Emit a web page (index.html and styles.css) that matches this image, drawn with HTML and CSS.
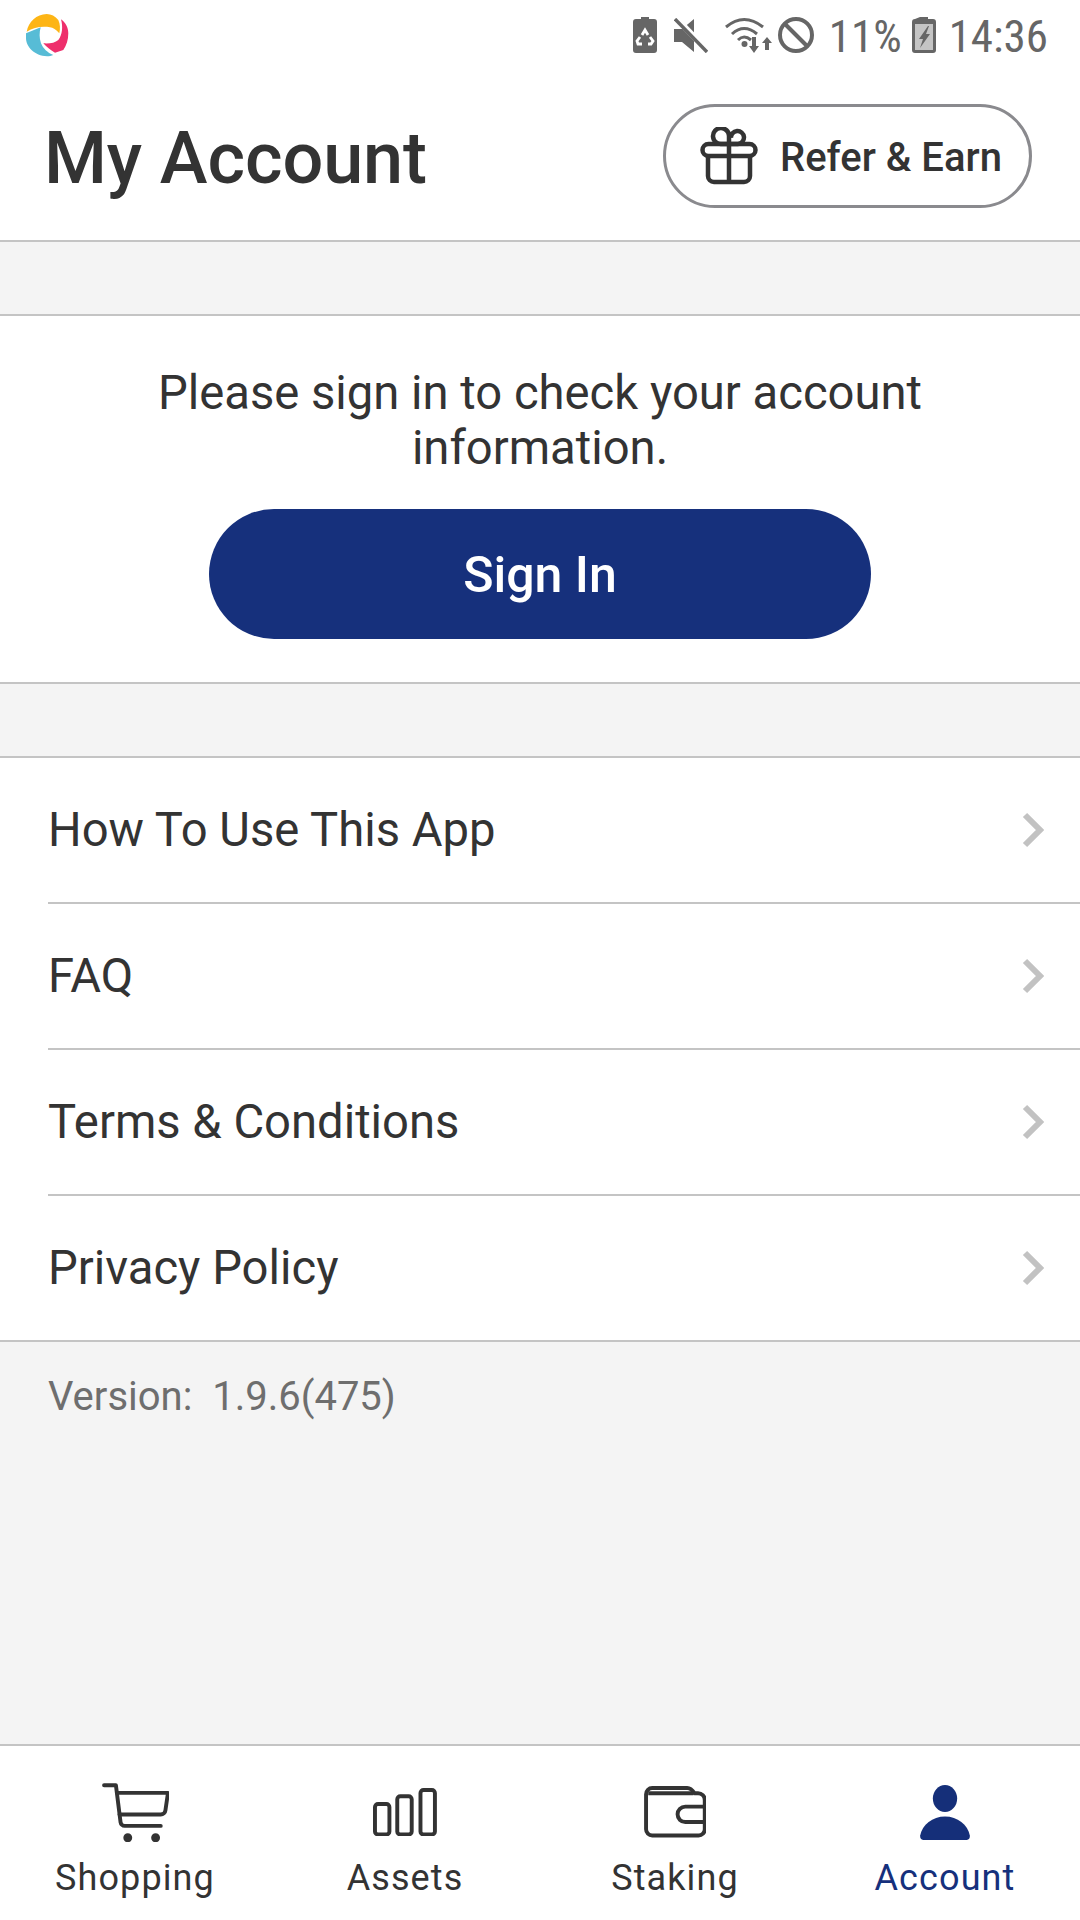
FILE: index.html
```html
<!DOCTYPE html>
<html lang="en">
<head>
<meta charset="utf-8">
<title>My Account</title>
<link rel="stylesheet" href="styles.css">
</head>
<body>
<div class="app">
  <div class="status">
    <svg class="logo" viewBox="0 0 43 43" width="43" height="43">
      <path fill="#fdb515" d="M.7 17.7C2.500 7.500 10.500.3 20.700 0c4.500 0 8.500 2 11.600 6 2 4 2 9 1 13.300C30 15.500 27 13.600 24 13.300 15.500 12 7.500 13.500.7 17.700z"/>
      <path fill="#ee2f6c" d="M35 5.300C39.500 8.500 42.300 13.500 42.300 19.300c0 6.700-1.700 12-5 16.700l-8.300 2.700c-4-2.500-8.300-5.700-11.700-9.400 6 .4 11.700-.3 15-3.300C36.500 21 37 12.500 35 5.300z"/>
      <path fill="#57bcd6" d="M0 19.300 14.700 13.300c-1.500 5-1.500 11 .3 16 2 5 6.500 9.500 12.300 11.700-2 1-4 1.300-6.300 1.300C8.500 42 0 32.500 0 24.300z"/>
    </svg>
    <div class="status-right">
      <svg class="st-icon" viewBox="0 0 24 36" width="24" height="36"><path fill="#666" d="M8 0h8v2h5a3 3 0 0 1 3 3v28a3 3 0 0 1-3 3H3a3 3 0 0 1-3-3V5a3 3 0 0 1 3-3h5z"/><path fill="none" stroke="#fff" stroke-width="2.800" d="M9 18l3-5 3 5M17 20l3 4-2 3h-3M9 27H5l-1-3 3-4"/></svg>
      <svg class="st-icon st-mute" viewBox="0 0 34 35" width="34" height="35"><path fill="#666" d="M0 11h8L20 1v33L8 24H0z"/><path stroke="#fff" stroke-width="6" d="M-1 -3l36 37"/><path stroke="#666" stroke-width="3.400" d="M1 1l32 33"/></svg>
      <svg class="st-icon st-wifi" viewBox="0 0 48 36" width="48" height="36"><g fill="none" stroke="#666" stroke-width="3"><path d="M1 10Q19-5 38 10"/><path d="M7 17Q19 6 32 17"/><path d="M13 23Q19 17 26 23"/></g><circle cx="19.500" cy="27" r="3" fill="#666"/><path fill="#666" d="M27 20h4v9h3l-5 7-5-7h3zM40 33v-7h-3l5-6 5 6h-3v7z"/></svg>
      <svg class="st-icon st-block" viewBox="0 0 36 36" width="36" height="36"><circle cx="18" cy="18" r="16" fill="none" stroke="#666" stroke-width="4"/><path stroke="#666" stroke-width="4" d="M7 7l22 22"/></svg>
      <span class="st-text st-pct">11%</span>
      <svg class="st-icon st-batt" viewBox="0 0 24 36" width="24" height="36"><path fill="#666" d="M8 0h8v2h5a3 3 0 0 1 3 3v28a3 3 0 0 1-3 3H3a3 3 0 0 1-3-3V5a3 3 0 0 1 3-3z"/><rect x="3" y="7" width="18" height="26" fill="#c4c4c4"/><path fill="#666" d="M16 9 7 22h4l-3 9 10-14h-4l3-8z"/></svg>
      <span class="st-text st-time">14:36</span>
    </div>
  </div>

  <header class="header">
    <h1 class="title">My Account</h1>
    <div class="refer">
      <svg class="gift" viewBox="0 0 58 58" width="58" height="58" fill="none" stroke="#333" stroke-width="4.500" stroke-linejoin="round"><rect x="2.500" y="17" width="53" height="12" rx="6"/><path d="M8 29v20a6 6 0 0 0 6 6h30a6 6 0 0 0 6-6V29M29 17v38"/><path d="M29 17h-7a8 8 0 1 1 7-8zM29 17h9a6.500 6.500 0 1 0-7-6"/></svg>
      <span class="refer-label">Refer &amp; Earn</span>
    </div>
  </header>

  <div class="spacer"></div>

  <section class="signin">
    <p class="signin-text">Please sign in to check your account information.</p>
    <button class="signin-btn">Sign In</button>
  </section>

  <div class="spacer"></div>

  <ul class="menu">
    <li class="menu-row"><span>How To Use This App</span><svg class="chev" viewBox="0 0 22 36" width="22" height="36"><path d="M3 3l15 15L3 33" fill="none" stroke="#c2c2c2" stroke-width="6"/></svg></li>
    <li class="menu-row"><span>FAQ</span><svg class="chev" viewBox="0 0 22 36" width="22" height="36"><path d="M3 3l15 15L3 33" fill="none" stroke="#c2c2c2" stroke-width="6"/></svg></li>
    <li class="menu-row"><span>Terms &amp; Conditions</span><svg class="chev" viewBox="0 0 22 36" width="22" height="36"><path d="M3 3l15 15L3 33" fill="none" stroke="#c2c2c2" stroke-width="6"/></svg></li>
    <li class="menu-row"><span>Privacy Policy</span><svg class="chev" viewBox="0 0 22 36" width="22" height="36"><path d="M3 3l15 15L3 33" fill="none" stroke="#c2c2c2" stroke-width="6"/></svg></li>
  </ul>

  <div class="version">Version:&nbsp; 1.9.6(475)</div>

  <nav class="tabs">
    <div class="tab">
      <div class="tab-icon"><svg viewBox="0 0 65 57" width="67" height="59" fill="none" stroke="#333" stroke-width="3.800" stroke-linecap="round" stroke-linejoin="round"><path d="M2 2h11.500l4.500 36a4 4 0 0 0 4 3.500h35"/><path d="M15 9.500h49l-2.500 17a4.500 4.500 0 0 1-4.500 4H17"/><circle cx="25" cy="53" r="2.800" fill="#333" stroke-width="3"/><circle cx="52" cy="53" r="2.800" fill="#333" stroke-width="3"/></svg></div>
      <span>Shopping</span>
    </div>
    <div class="tab">
      <div class="tab-icon"><svg viewBox="0 0 62 47" width="64" height="48.500" fill="none" stroke="#333" stroke-width="3.800"><rect x="1.900" y="15.500" width="14" height="29.600" rx="3"/><rect x="23.500" y="8" width="14" height="37.100" rx="3"/><rect x="46" y="1.900" width="14" height="43.200" rx="3"/></svg></div>
      <span>Assets</span>
    </div>
    <div class="tab">
      <div class="tab-icon"><svg viewBox="0 0 60 50" width="62" height="51.500" fill="none" stroke="#333" stroke-width="3.800" stroke-linejoin="round"><path d="M1.900 8a6 6 0 0 1 6-6h34c3 0 5 2 7 5h3.500a6.500 6.500 0 0 1 6.500 6.500v28.500a6 6 0 0 1-6 6H7.900a6 6 0 0 1-6-6z"/><path d="M4 7h44"/><path d="M58 20H40a7.500 7.500 0 0 0 0 15h18"/></svg></div>
      <span>Staking</span>
    </div>
    <div class="tab active">
      <div class="tab-icon"><svg viewBox="0 0 48 53" width="50" height="55" fill="#152f79"><ellipse cx="24" cy="13" rx="11.700" ry="13"/><path d="M0 49C2 38 12 30.300 24 30.300s22 7.700 24 18.700c0 2.500-1 4-3 4H3c-2 0-3-1.500-3-4z"/></svg></div>
      <span>Account</span>
    </div>
  </nav>
</div>
</body>
</html>
```

FILE: styles.css
```css
* { box-sizing: border-box; }
html, body { margin: 0; padding: 0; }
body { font-family: Roboto, "Liberation Sans", sans-serif; color: #333; background: #fff; }
.app { width: 1080px; height: 1920px; display: flex; flex-direction: column; overflow: hidden; }

.status { height: 72px; display: flex; align-items: center; justify-content: space-between; padding: 0 32px 2px 26px; }
.logo { flex: none; }
.status-right { display: flex; align-items: center; color: #666; }
.st-icon { flex: none; display: block; }
.st-mute { margin-left: 17px; }
.st-wifi { margin-left: 16.500px; }
.st-block { margin-left: 5px; }
.st-text { font-size: 45px; line-height: 1; color: #666; font-stretch: 85%; padding-top: 2px; }
.st-pct { margin-left: 15px; margin-right: 10px; }
.st-batt { margin-right: 13px; }

.header { height: 170px; display: flex; align-items: center; justify-content: space-between; padding: 0 48px 0 44px; border-bottom: 2px solid #c4c4c4; }
.title { margin: 0; padding-top: 5px; font-size: 72px; font-weight: 500; color: #333; letter-spacing: -0.100px; }
.refer { width: 369px; height: 104px; border: 3px solid #8a8a8e; border-radius: 52px; display: flex; align-items: center; padding-left: 34px; gap: 22px; font-size: 40px; font-weight: 500; color: #333; }
.refer-label { padding-top: 3px; }
.gift { flex: none; }

.spacer { height: 74px; background: #f4f4f4; border-bottom: 2px solid #c4c4c4; flex: none; }

.signin { height: 368px; padding-top: 50px; display: flex; flex-direction: column; align-items: center; border-bottom: 2px solid #c4c4c4; flex: none; }
.signin-text { margin: 0; width: 800px; text-align: center; font-size: 47.200px; line-height: 55px; color: #333; }
.signin-btn { margin-top: 33px; width: 662px; height: 130px; padding: 2px 0 0; border: 0; border-radius: 65px; background: #16307c; color: #fff; font-family: inherit; font-size: 50px; font-weight: 500; }

.menu { list-style: none; margin: 0; padding: 0 0 0 48px; flex: none; }
.menu-row { height: 146px; display: flex; align-items: center; justify-content: space-between; padding: 0 36px 0 0; border-bottom: 2px solid #c4c4c4; font-size: 47.200px; color: #333; }
.menu-row:last-child { margin-left: -48px; padding-left: 48px; }

.version { flex: 1; background: #f4f4f4; padding: 31px 0 0 48px; font-size: 40px; line-height: 48px; color: #6e6e6e; border-bottom: 2px solid #c4c4c4; }

.tabs { height: 174px; display: grid; grid-template-columns: repeat(4, 270px); flex: none; }
.tab { display: flex; flex-direction: column; align-items: center; padding-top: 36px; font-size: 36px; line-height: 42px; letter-spacing: 1.100px; color: #333; }
.tab-icon { height: 60px; margin-bottom: 15px; display: flex; align-items: center; justify-content: center; }
.tab-icon svg { display: block; }
.tab.active { color: #16307c; }
```
